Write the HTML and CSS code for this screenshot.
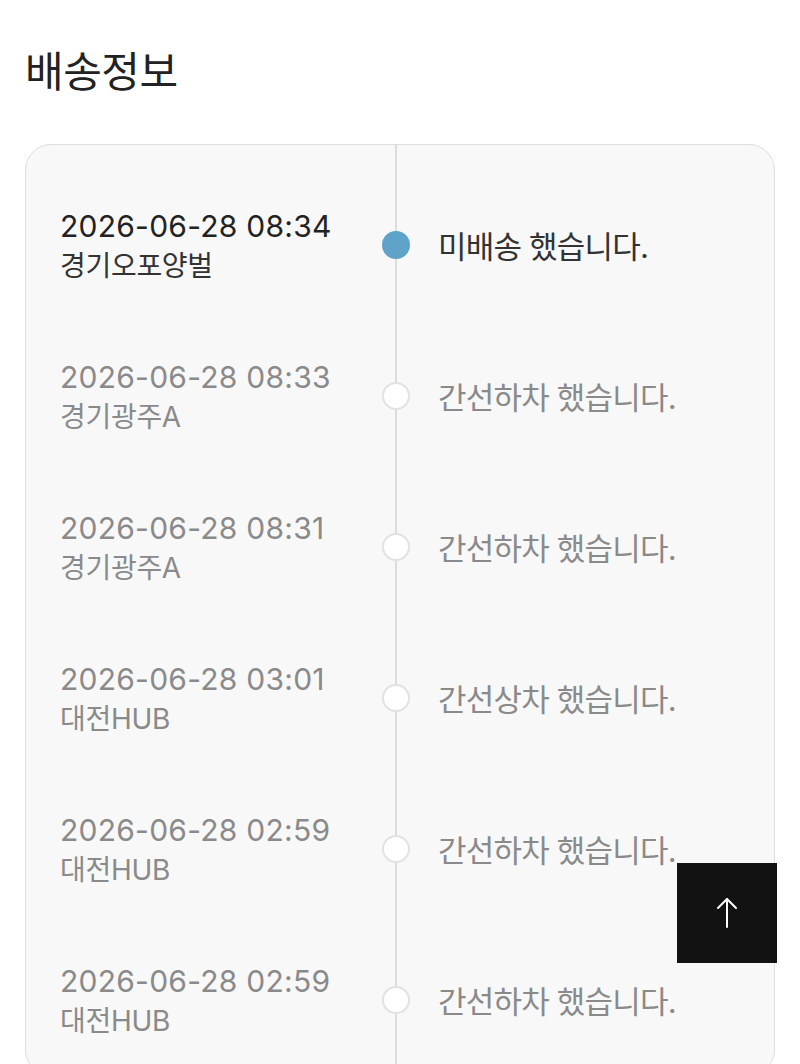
FILE: index.html
```html
<!DOCTYPE html>
<html lang="ko">
<head>
	<meta charset="utf-8" />
	<title>배송정보</title>
	<link rel="stylesheet" href="styles.css">
</head>
<body>
	<div class="page">
		<h1 class="title">배송정보</h1>

		<div class="track">
			<div class="step on">
				<div class="when">
					<div class="date">2026-06-28 08:34</div>
					<div class="place">경기오포양벌</div>
				</div>
				<span class="dot"></span>
				<div class="state">미배송 했습니다.</div>
			</div>

			<div class="step">
				<div class="when">
					<div class="date">2026-06-28 08:33</div>
					<div class="place">경기광주A</div>
				</div>
				<span class="dot"></span>
				<div class="state">간선하차 했습니다.</div>
			</div>

			<div class="step">
				<div class="when">
					<div class="date">2026-06-28 08:31</div>
					<div class="place">경기광주A</div>
				</div>
				<span class="dot"></span>
				<div class="state">간선하차 했습니다.</div>
			</div>

			<div class="step">
				<div class="when">
					<div class="date">2026-06-28 03:01</div>
					<div class="place">대전HUB</div>
				</div>
				<span class="dot"></span>
				<div class="state">간선상차 했습니다.</div>
			</div>

			<div class="step">
				<div class="when">
					<div class="date">2026-06-28 02:59</div>
					<div class="place">대전HUB</div>
				</div>
				<span class="dot"></span>
				<div class="state">간선하차 했습니다.</div>
			</div>

			<div class="step">
				<div class="when">
					<div class="date">2026-06-28 02:59</div>
					<div class="place">대전HUB</div>
				</div>
				<span class="dot"></span>
				<div class="state">간선하차 했습니다.</div>
			</div>
		</div>
	</div>

	<a class="to-top" href="#">
		<svg width="24" height="34" viewBox="0 0 24 34" fill="none" stroke="#fff" stroke-width="2" stroke-linecap="round" stroke-linejoin="round">
			<path d="M12 3 V31" />
			<path d="M3 12 L12 3 L21 12" />
		</svg>
	</a>
</body>
</html>
```

FILE: styles.css
```css
html, body {
	margin: 0;
	padding: 0;
	background: #fff;
}
body {
	font-family: "Inter", "Noto Sans CJK KR", sans-serif;
	color: #222;
}
.page {
	padding: 42px 25px 0;
}
.title {
	margin: 0 0 42px;
	font-size: 42px;
	font-weight: 400;
	line-height: 60px;
	letter-spacing: -0.5px;
	color: #222;
}

/* 카드 + 가운데 세로선 */
.track {
	border: 1px solid #dedede;
	border-radius: 26px;
	padding: 24px 0 0 34px;
	background: linear-gradient(#dcdcdc, #dcdcdc) no-repeat 369px 0 / 2px 100%, #f8f8f8;
}
.step {
	display: grid;
	grid-template-columns: 322px 28px 1fr;
	align-items: center;
	padding: 35.5px 0;
}
.date {
	font-size: 30px;
	line-height: 42px;
	letter-spacing: 0.25px;
	color: #8a8a8a;
}
.place {
	font-size: 28px;
	line-height: 38px;
	letter-spacing: -0.3px;
	color: #8a8a8a;
}
.dot {
	width: 24px;
	height: 24px;
	border: 2px solid #e2e2e2;
	border-radius: 50%;
	background: #fff;
}
.state {
	padding-left: 28px;
	font-size: 31px;
	letter-spacing: -0.8px;
	color: #8a8a8a;
}

/* 현재 상태 */
.step.on .date { color: #222; }
.step.on .place { color: #333; }
.step.on .state { color: #333; }
.step.on .dot {
	border-color: #5fa3c9;
	background: #5fa3c9;
}

.to-top {
	position: fixed;
	right: 23px;
	bottom: 101px;
	width: 100px;
	height: 100px;
	background: #121212;
	display: flex;
	align-items: center;
	justify-content: center;
}
```
